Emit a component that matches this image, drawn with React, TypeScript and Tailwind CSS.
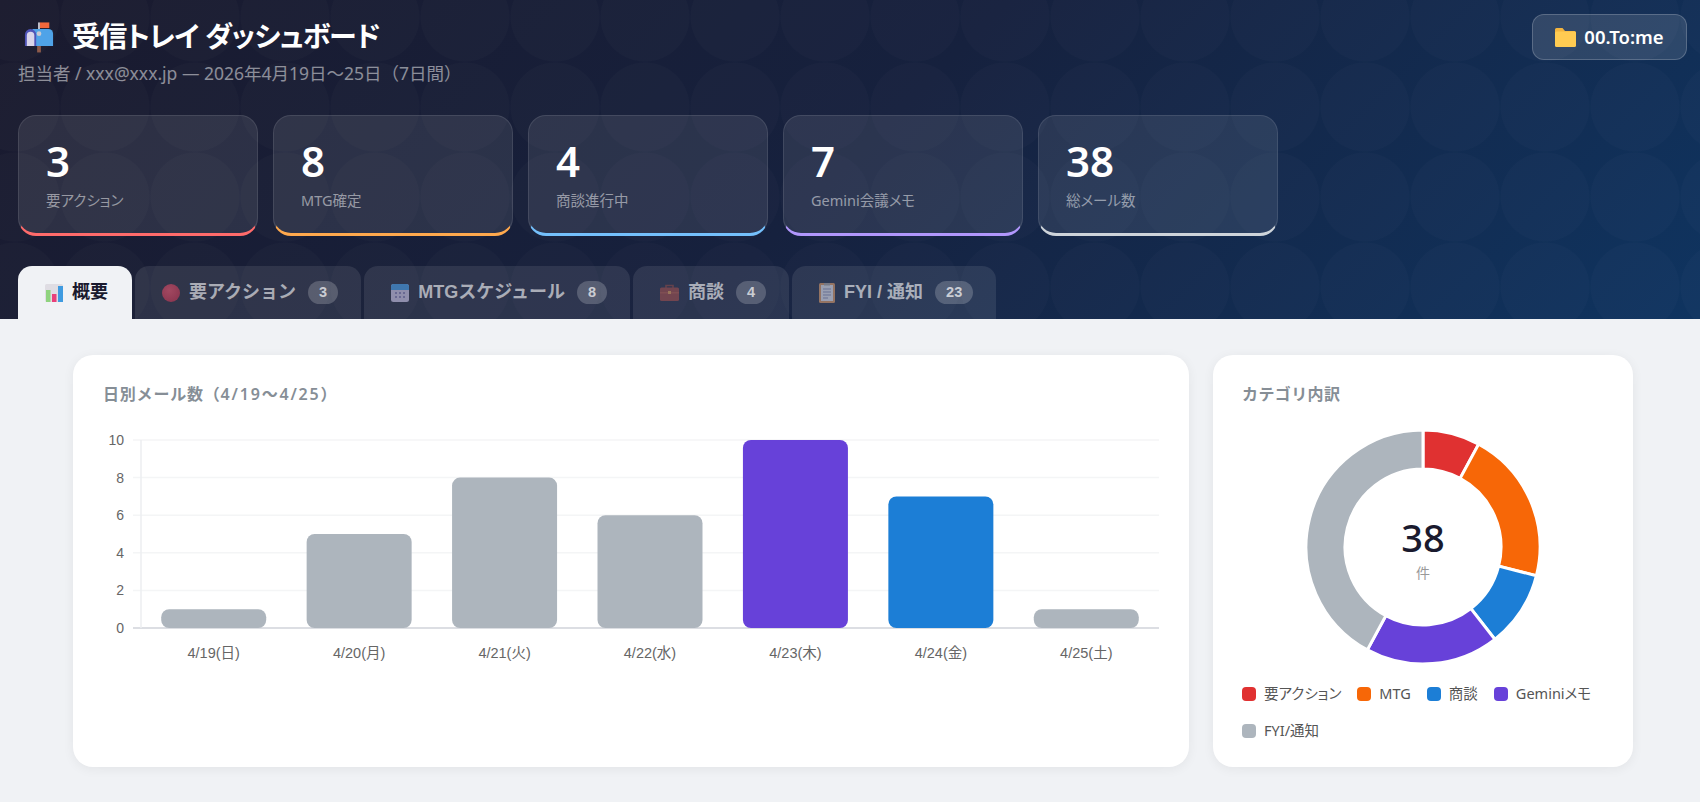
const JP = '"Noto Sans CJK JP"'

const STATS = [
  { value: '3', label: '要アクション', border: 'border-b-[#ff6b6b]' },
  { value: '8', label: 'MTG確定', border: 'border-b-[#ffa94d]' },
  { value: '4', label: '商談進行中', border: 'border-b-[#74c0fc]' },
  { value: '7', label: 'Gemini会議メモ', border: 'border-b-[#b197fc]' },
  { value: '38', label: '総メール数', border: 'border-b-[#ced4da]' },
]

const DAILY = [
  { label: '4/19(日)', value: 1, color: '#adb5bd' },
  { label: '4/20(月)', value: 5, color: '#adb5bd' },
  { label: '4/21(火)', value: 8, color: '#adb5bd' },
  { label: '4/22(水)', value: 6, color: '#adb5bd' },
  { label: '4/23(木)', value: 10, color: '#6741d9' },
  { label: '4/24(金)', value: 7, color: '#1c7ed6' },
  { label: '4/25(土)', value: 1, color: '#adb5bd' },
]

const CATEGORIES = [
  { label: '要アクション', value: 3, color: '#e03131', dot: 'bg-[#e03131]' },
  { label: 'MTG', value: 8, color: '#f76707', dot: 'bg-[#f76707]' },
  { label: '商談', value: 4, color: '#1c7ed6', dot: 'bg-[#1c7ed6]' },
  { label: 'Geminiメモ', value: 7, color: '#6741d9', dot: 'bg-[#6741d9]' },
  { label: 'FYI/通知', value: 16, color: '#adb5bd', dot: 'bg-[#adb5bd]' },
]

function MailboxIcon() {
  return (
    <svg width="30" height="33" viewBox="0 0 32 34">
      <rect x="14" y="25" width="4" height="9" fill="#8d5a4a" />
      <rect x="15" y="2" width="2" height="14" fill="#c9c9d2" />
      <path d="M17 2h10v6H17z" fill="#f2683c" />
      <path d="M9 9h17a5 5 0 0 1 5 5v13H9z" fill="#4fa3e8" />
      <path d="M7 9a6 6 0 0 1 6 6v12H1V15a6 6 0 0 1 6-6z" fill="#4f54b8" />
      <path d="M3 16a4 4 0 0 1 8 0v11H3z" fill="#d9d5ea" />
      <circle cx="16" cy="14" r="2.5" fill="#c9c9d2" />
    </svg>
  )
}

function ChartIcon() {
  return (
    <svg width="18" height="18" viewBox="0 0 18 18">
      <rect width="18" height="18" rx="1.5" fill="#dfdde3" />
      <rect x="1" y="6" width="4.5" height="12" fill="#8fd37e" />
      <rect x="7" y="10" width="4.5" height="8" fill="#e8407a" />
      <rect x="13" y="2" width="5" height="16" fill="#3f9be0" />
    </svg>
  )
}

function CalendarIcon() {
  return (
    <svg width="18" height="18" viewBox="0 0 18 18">
      <rect width="18" height="18" rx="2.5" fill="#cfc9ec" />
      <path d="M0 6V2.5A2.5 2.5 0 0 1 2.5 0h13A2.5 2.5 0 0 1 18 2.5V6z" fill="#4aa3f0" />
      <path d="M4 8h2v2H4zM8 8h2v2H8zM12 8h2v2h-2zM4 12h2v2H4zM8 12h2v2H8zM12 12h2v2h-2z" fill="#8f8bc0" />
    </svg>
  )
}

function BriefcaseIcon() {
  return (
    <svg width="19" height="17" viewBox="0 0 19 17">
      <path d="M6 4V1.5h7V4" fill="none" stroke="#8a4a4a" strokeWidth="1.6" />
      <rect y="3.5" width="19" height="13.5" rx="1.5" fill="#a04f4f" />
      <rect y="8" width="19" height="1.5" fill="#b55f55" />
      <rect x="8" y="7" width="3" height="3" fill="#e0a060" />
    </svg>
  )
}

function ClipboardIcon() {
  return (
    <svg width="16" height="20" viewBox="0 0 16 20">
      <rect width="16" height="20" rx="1.5" fill="#d89a6c" />
      <rect x="2" y="2" width="12" height="16" fill="#e2e4f0" />
      <path d="M4 6h8M4 9h8M4 12h8M4 15h5" stroke="#8f95bd" strokeWidth="1" />
      <rect x="5" y="0" width="6" height="2.5" fill="#a8a5a8" />
    </svg>
  )
}

function FolderIcon() {
  return (
    <svg width="21" height="19" viewBox="0 0 21 19">
      <path d="M1.5 0h6l2.5 3h9.5A1.5 1.5 0 0 1 21 4.5V8H0V1.5A1.5 1.5 0 0 1 1.5 0z" fill="#f3b43f" />
      <rect y="3.5" width="21" height="15.5" rx="1.5" fill="#ffcb52" />
    </svg>
  )
}

function Tab({ icon, label, count, active }: { icon: React.ReactNode; label: string; count?: number; active?: boolean }) {
  return (
    <div
      className={
        active
          ? 'flex h-[53px] items-center gap-[9px] rounded-t-[14px] bg-[#f0f2f5] pl-[27px] pr-[24px] text-[#1a1a2e]'
          : 'flex h-[53px] items-center gap-[9px] rounded-t-[14px] bg-white/[0.09] pl-[27px] pr-[23px] text-white/60'
      }
    >
      <span className={active ? 'flex items-center' : 'flex items-center opacity-60'}>{icon}</span>
      <span className="text-[18px] font-bold" style={{ fontFamily: `"Liberation Sans", ${JP}, sans-serif` }}>
        {label}
      </span>
      {count !== undefined && (
        <span className="ml-[3px] rounded-full bg-white/[0.2] px-[11px] py-[1px] text-[14.5px] font-bold text-white/70" style={{ fontFamily: '"Liberation Sans", sans-serif' }}>
          {count}
        </span>
      )}
    </div>
  )
}

function BarChart() {
  const left = 68
  const right = 1086
  const top = 25
  const bottom = 213
  const step = (right - left) / 7
  const y = (v: number) => bottom - ((bottom - top) * v) / 10
  return (
    <svg width="1116" height="270" viewBox="0 0 1116 270" className="block">
      {[0, 2, 4, 6, 8, 10].map((v) => (
        <g key={v}>
          <line x1={left - 8} x2={right} y1={y(v)} y2={y(v)} stroke={v === 0 ? '#dcdee3' : '#f4f5f6'} strokeWidth={v === 0 ? 2 : 1.5} />
          <text x={left - 17} y={y(v) + 5} textAnchor="end" fontSize="14" fill="#666" fontFamily='"Liberation Sans", sans-serif'>
            {v}
          </text>
        </g>
      ))}
      <line x1={left} x2={left} y1={top} y2={bottom} stroke="#eceef1" strokeWidth="1.5" />
      {DAILY.map((d, i) => {
        const barW = 105
        const x = left + step * i + (step - barW) / 2
        const h = bottom - y(d.value)
        return (
          <g key={d.label}>
            <rect x={x} y={y(d.value)} width={barW} height={h} rx={Math.min(8, h / 2)} fill={d.color} />
            <text x={x + barW / 2} y={bottom + 30} textAnchor="middle" fontSize="14.5" fill="#666" fontFamily={`"Liberation Sans", ${JP}, sans-serif`}>
              {d.label}
            </text>
          </g>
        )
      })}
    </svg>
  )
}

function Donut() {
  const total = CATEGORIES.reduce((s, c) => s + c.value, 0)
  const cx = 120
  const cy = 120
  const ro = 117
  const ri = 78
  let acc = 0
  const pt = (r: number, a: number) => `${cx + r * Math.sin(a)} ${cy - r * Math.cos(a)}`
  return (
    <svg width="240" height="240" viewBox="0 0 240 240" className="block">
      {CATEGORIES.map((c) => {
        const a0 = (acc / total) * Math.PI * 2
        acc += c.value
        const a1 = (acc / total) * Math.PI * 2
        const large = a1 - a0 > Math.PI ? 1 : 0
        return (
          <path
            key={c.label}
            d={`M${pt(ro, a0)}A${ro} ${ro} 0 ${large} 1 ${pt(ro, a1)}L${pt(ri, a1)}A${ri} ${ri} 0 ${large} 0 ${pt(ri, a0)}Z`}
            fill={c.color}
            stroke="#fff"
            strokeWidth="3"
          />
        )
      })}
    </svg>
  )
}

export default function App() {
  return (
    <div className="h-[802px] w-[1700px] overflow-hidden bg-[#f0f2f5]" style={{ fontFamily: `"Noto Sans", ${JP}, sans-serif` }}>
      <header className="h-[319px] bg-[linear-gradient(135deg,#1a1a2e_0%,#16213e_50%,#0f3460_100%)]">
        <div className="h-full bg-[radial-gradient(circle_at_45px_45px,rgba(255,255,255,0.015)_44px,transparent_45px)] bg-[size:90px_90px] bg-[position:-30px_-28px] px-[18px] pt-[14px]">
          <div className="flex items-start justify-between">
            <div>
              <div className="flex items-center gap-[18px] pl-[6px] pt-[3px]">
                <MailboxIcon />
                <h1 className="text-[28px] font-bold leading-[38px] tracking-[-0.8px] text-white [font-feature-settings:'palt']">受信トレイ ダッシュボード</h1>
              </div>
              <p className="mt-[6px] text-[17.5px] leading-[24px] text-white/50">担当者 / xxx@xxx.jp — 2026年4月19日～25日（7日間）</p>
            </div>
            <div className="mr-[-5px] flex h-[46px] w-[155px] items-center justify-center gap-[8px] rounded-[12px] border border-white/20 bg-white/[0.12] text-[18.5px] font-semibold text-white">
              <FolderIcon />
              00.To:me
            </div>
          </div>
          <div className="mt-[30px] flex gap-[15px] [font-feature-settings:'palt']">
            {STATS.map((s) => (
              <div key={s.label} className={`h-[121px] w-[240px] rounded-[18px] border border-b-[3px] border-white/[0.1] bg-white/[0.09] px-[27px] pt-[19px] ${s.border}`}>
                <div className="text-[42px] font-semibold leading-[52px] text-white">{s.value}</div>
                <div className="mt-[3px] text-[14.5px] leading-[20px] text-white/50">{s.label}</div>
              </div>
            ))}
          </div>
          <nav className="mt-[30px] flex gap-[3px]">
            <Tab active icon={<ChartIcon />} label="概要" />
            <Tab icon={<span className="block h-[18px] w-[18px] rounded-full bg-[radial-gradient(circle_at_40%_35%,#ee5570,#c0304e)]" />} label="要アクション" count={3} />
            <Tab icon={<CalendarIcon />} label="MTGスケジュール" count={8} />
            <Tab icon={<BriefcaseIcon />} label="商談" count={4} />
            <Tab icon={<ClipboardIcon />} label="FYI / 通知" count={23} />
          </nav>
        </div>
      </header>
      <main className="flex gap-[24px] pl-[73px] pt-[36px]">
        <section className="h-[412px] w-[1116px] rounded-[20px] bg-white shadow-[0_2px_12px_rgba(0,0,0,0.06)]">
          <h2 className="px-[30px] pt-[27px] text-[16px] font-semibold leading-[24px] tracking-[0.8px] text-[#868e96]">
            日別メール数（<span className="tracking-[1.8px]">4/19～4/25</span>）
          </h2>
          <div className="pt-[9px]">
            <BarChart />
          </div>
        </section>
        <section className="h-[412px] w-[420px] rounded-[20px] bg-white px-[29px] pt-[27px] shadow-[0_2px_12px_rgba(0,0,0,0.06)]">
          <h2 className="text-[16px] font-semibold leading-[24px] tracking-[0.4px] text-[#868e96]">カテゴリ内訳</h2>
          <div className="relative mx-auto mt-[21px] h-[240px] w-[240px]">
            <Donut />
            <div className="absolute inset-0 flex flex-col items-center justify-center pt-[3px]">
              <div className="text-[38px] font-medium leading-[46px] text-[#1a1a2e]">38</div>
              <div className="mt-[3px] text-[14px] leading-[20px] text-[#999]">件</div>
            </div>
          </div>
          <ul className="mt-[15px] flex flex-wrap gap-x-[16px] gap-y-[14px] [font-feature-settings:'palt']">
            {CATEGORIES.map((c) => (
              <li key={c.label} className="flex items-center gap-[8px] text-[14.5px] leading-[23px] text-[#555]">
                <span className={`h-[14px] w-[14px] rounded-[4px] ${c.dot}`} />
                {c.label}
              </li>
            ))}
          </ul>
        </section>
      </main>
    </div>
  )
}
